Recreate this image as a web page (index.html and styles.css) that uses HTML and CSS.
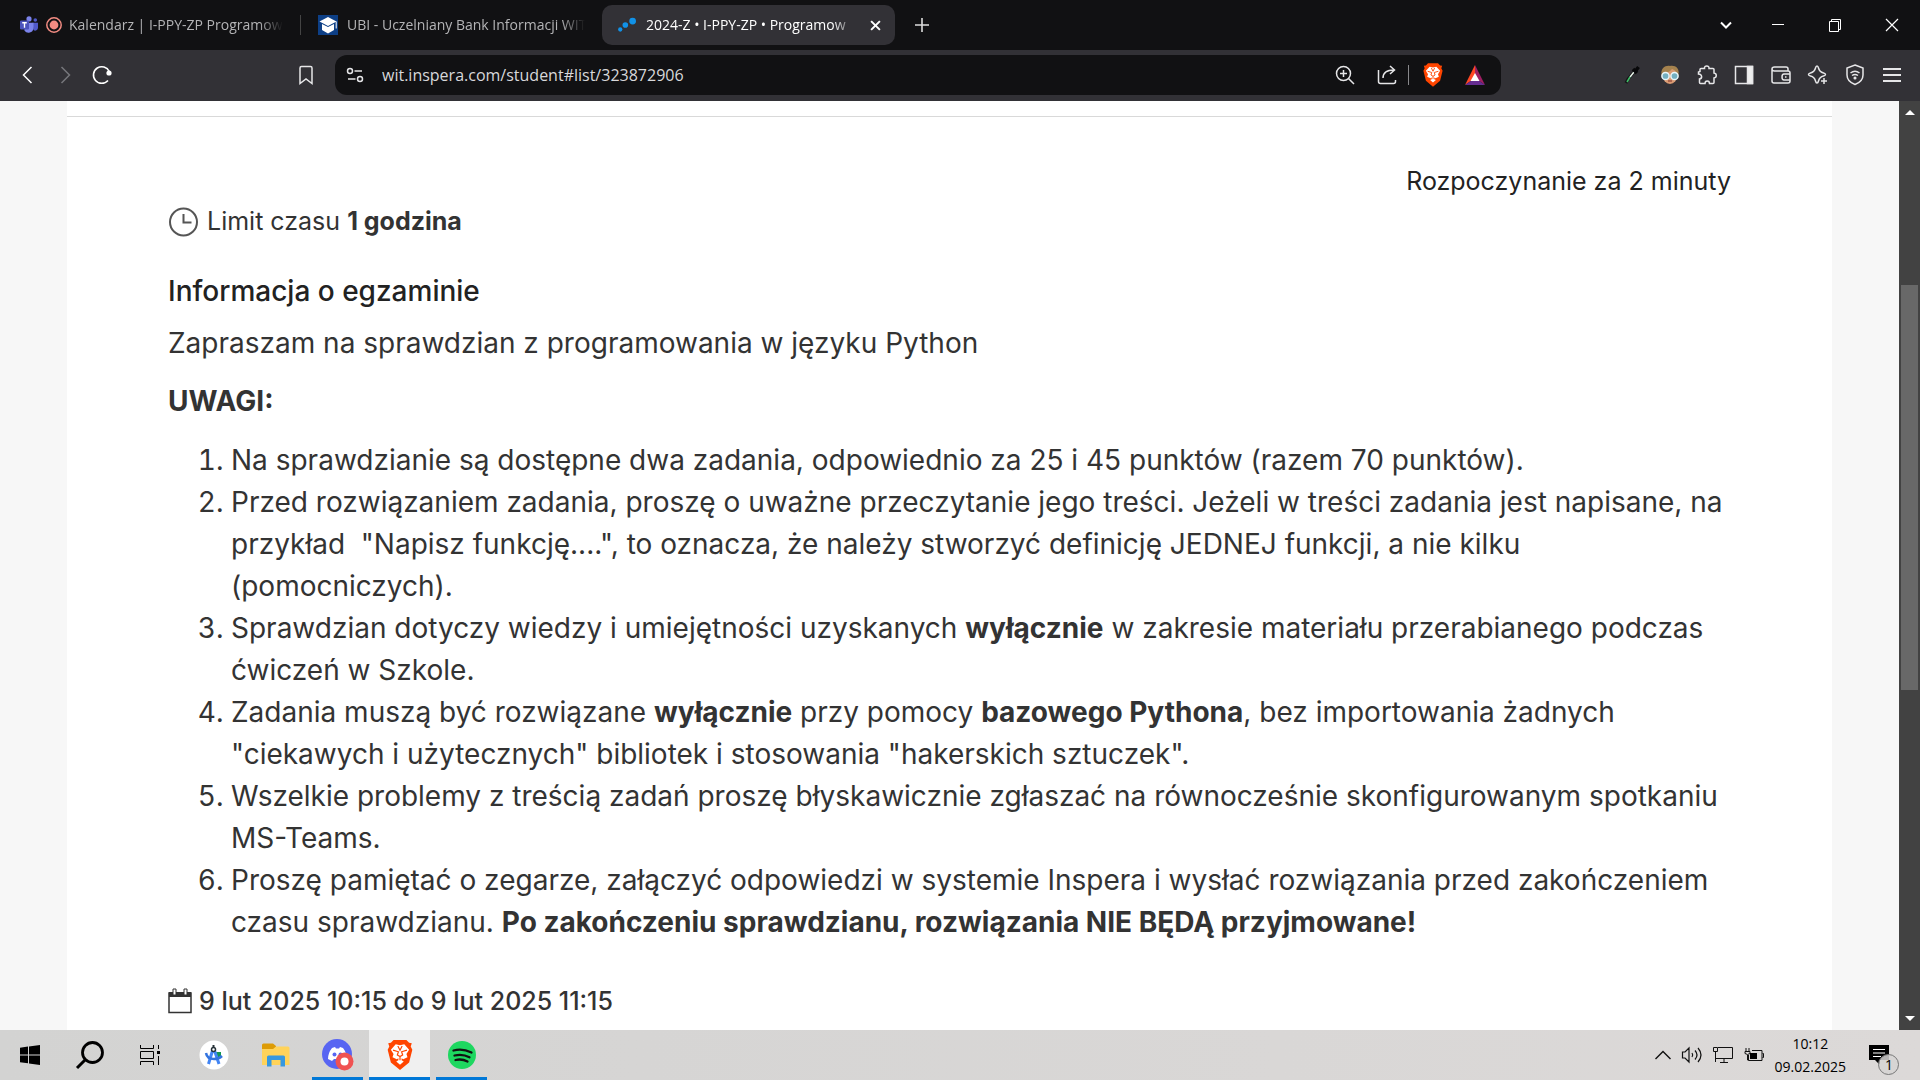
FILE: index.html
```html
<!DOCTYPE html>
<html lang="pl">
<head>
<meta charset="utf-8">
<title>2024-Z • I-PPY-ZP • Programowanie</title>
<link rel="stylesheet" href="styles.css">
</head>
<body>
<div class="desktop">
  <header class="tabs">
    <a class="tab tab-first" href="#kalendarz">
      <svg class="fav" viewBox="0 0 16 16"><circle cx="8" cy="2.6" r="2.3" fill="#7b83eb"/><circle cx="13.6" cy="3.6" r="1.6" fill="#5059c9"/><path d="M11 6h5v4.5a2.5 2.5 0 0 1-4 2z" fill="#5059c9"/><path d="M4 6h8v5a4.5 4.5 0 0 1-8 2z" fill="#7b83eb"/><rect x="0" y="4" width="8" height="8" rx="1" fill="#4b53bc"/><path d="M2 6h4M4 6v4.4" stroke="#fff" stroke-width="1.2"/></svg>
      <svg class="rec" viewBox="0 0 16 16"><circle cx="8" cy="8" r="7.2" fill="none" stroke="#f28b82" stroke-width="1.5"/><circle cx="8" cy="8" r="4.4" fill="#f28b82"/></svg>
      <span class="tab-title">Kalendarz | I-PPY-ZP Programow</span>
    </a>
    <a class="tab tab-second" href="#ubi">
      <svg class="fav-lg" viewBox="0 0 20 20"><path d="M0 0h20v20H0z" fill="#0d3f86"/><path d="M10 2l8.500 4.500L10 11 1.500 6.500z" fill="#fff"/><path d="M4 9v6l6 3.500 6-3.500V9l-6 3z" fill="#fff"/><path d="M18.200 6.500v7" stroke="#fff"/></svg>
      <span class="tab-title">UBI - Uczelniany Bank Informacji WIT</span>
    </a>
    <a class="tab tab-active" href="#egzamin">
      <svg class="fav" viewBox="0 0 16 16"><g fill="#1192e8"><circle cx="2" cy="12" r="1.900"/><circle cx="6.500" cy="8" r="2.500"/><circle cx="13" cy="4.500" r="3"/></g></svg>
      <span class="tab-title">2024-Z • I-PPY-ZP • Programow</span>
      <svg class="x" viewBox="0 0 10 10"><path d="M1 1l8 8M9 1L1 9" stroke="#fff" stroke-width="1.800"/></svg>
    </a>
    <button class="new-tab" aria-label="Nowa karta"><svg width="14" height="14" viewBox="0 0 14 14"><path d="M7 0v14M0 7h14" stroke="#ddd" stroke-width="1.600"/></svg></button>
    <div class="window-buttons">
      <button aria-label="Lista kart"><svg width="14" height="14" viewBox="0 0 14 14"><path d="M2 4.500l5 5 5-5" fill="none" stroke="#fff" stroke-width="2"/></svg></button>
      <button aria-label="Minimalizuj"><svg width="14" height="14" viewBox="0 0 14 14"><path d="M1 6.500h12" stroke="#fff"/></svg></button>
      <button aria-label="Przywróć"><svg width="14" height="14" viewBox="0 0 14 14"><path d="M1.500 3.500h9v10h-9zM3.500 3.500v-2h9v10h-2" fill="none" stroke="#fff"/></svg></button>
      <button aria-label="Zamknij"><svg width="14" height="14" viewBox="0 0 14 14"><path d="M1 1l12 12M13 1L1 13" stroke="#fff" stroke-width="1.200"/></svg></button>
    </div>
  </header>

  <nav class="toolbar">
    <div class="nav-buttons">
      <button aria-label="Wstecz"><svg viewBox="0 0 20 20"><path d="M13.500 2L5.500 10l8 8" stroke="#fff"/></svg></button>
      <button aria-label="Dalej"><svg viewBox="0 0 20 20"><path d="M6.500 2l8 8-8 8" stroke="#77777c"/></svg></button>
      <button aria-label="Odśwież"><svg viewBox="0 0 20 20"><path d="M16 15.500A8.300 8.300 0 1 1 17.300 6.500" stroke="#fff" stroke-width="1.600"/><circle cx="17" cy="8" r="2.600" fill="#fff" stroke="none"/></svg></button>
    </div>
    <button class="bookmark" aria-label="Dodaj zakładkę"><svg viewBox="0 0 20 20"><path d="M4 3q0-1.500 1.500-1.500h9Q16 1.500 16 3v15.500l-6-4.500-6 4.500z"/></svg></button>
    <div class="address">
      <svg viewBox="0 0 20 20"><circle cx="5" cy="6" r="2.500"/><path d="M9.500 6H17M3 14h7.500"/><circle cx="15" cy="14" r="2.500"/></svg>
      <input class="url" type="text" aria-label="Adres" value="wit.inspera.com/student#list/323872906">
      <button aria-label="Powiększenie"><svg viewBox="0 0 20 20"><circle cx="8.500" cy="8.500" r="7"/><path d="M13.500 13.500l5.500 5.500M8.500 5v7M5 8.500h7"/></svg></button>
      <button aria-label="Udostępnij"><svg viewBox="0 0 20 20"><path d="M1.500 5v11.500q0 2 2 2h13q2 0 2-2V15M6 13c0-6 4-8 11-8M13 1l4.500 4L13 9"/></svg></button>
      <span class="sep"></span>
      <button aria-label="Brave Shields"><svg class="color tall" viewBox="0 0 24 28"><use href="#lion"/></svg></button>
      <button aria-label="Brave Rewards"><svg class="color" viewBox="0 0 20 20"><path d="M10 0L0 20l10-7z" fill="#ff4724"/><path d="M10 0l10 20-10-7z" fill="#9e1f63"/><path d="M0 20h20l-10-7z" fill="#662d91"/><path d="M10 8l4.500 8h-9z" fill="#fff"/></svg></button>
    </div>
    <div class="extensions">
      <button aria-label="Próbnik kolorów"><svg viewBox="0 0 20 20"><path d="M11 7L5 14l-2 4" stroke="#151517" stroke-width="3"/><path d="M11 7L7 12" stroke="#e8f4ea"/><path d="M7 12l-3 5" stroke="#3fbf68"/><path d="M10 4l4 4M12.500 6l3-4" stroke="#08080a" stroke-width="3.500"/></svg></button>
      <button aria-label="Profil"><svg class="color" viewBox="0 0 20 20"><ellipse cx="10" cy="10" rx="7.500" ry="9" fill="#d99a72"/><path d="M2 12C-1 2 7 0 10 1c4-1 11 1 8 11-1-5-3-7-6-8-3 4-7 4-9 4z" fill="#a5824e"/><circle cx="5.500" cy="11" r="3.600" fill="#74afc0" stroke="#e8f6fa"/><circle cx="14.500" cy="11" r="3.600" fill="#74afc0" stroke="#e8f6fa"/><path d="M8 16h4" stroke="#9b5140"/></svg></button>
      <button aria-label="Rozszerzenia"><svg viewBox="0 0 20 20"><path d="M4 3.500h3.500c-.5-3.500 5-3.500 4.500 0H16q1 0 1 1V8c3 .5 3 4.500 0 5v4.500q0 1-1 1h-3.500c0-3.500-4.500-3.500-4.500 0H3.500q-1 0-1-1V14c3-.5 3-4.500-1-5V7l1.500-.5v-2q0-1 1-1z"/></svg></button>
      <button aria-label="Panel boczny"><svg viewBox="0 0 20 20"><path d="M1.500 1.500h17v17h-17z"/><path d="M13.500 1.500h5v17h-5z" fill="#eee"/></svg></button>
      <button aria-label="Portfel"><svg viewBox="0 0 20 20"><path d="M17 6V4q0-2-2-2H3.500Q1 2 1 4t2.500 2H17q2 0 2 2v8q0 2-2 2H3q-2 0-2-2V4M19 9h-6q-2 0-2 3t2 3h6M14 12h1.500"/></svg></button>
      <button aria-label="Leo AI"><svg viewBox="0 0 20 20"><path d="M9 1q1 0 1.500 2 1 4 5 5 2 .5 2 1.500t-2 1.500q-4 1-5 5-.5 2-1.500 2t-1.500-2q-1-4-5-5-2-.5-2-1.500T2.500 8q4-1 5-5Q8 1 9 1z"/><path d="M16 13v6M13 16h6"/></svg></button>
      <button aria-label="VPN"><svg viewBox="0 0 20 20"><path d="M10 0l8 3v7c0 5-4 8-8 9.500C6 18 2 15 2 10V3z"/><path d="M5.500 8q4.500-3.500 9 0M7 10.500q3-2 6 0"/><circle cx="10" cy="13" r=".8"/></svg></button>
      <button aria-label="Menu"><svg viewBox="0 0 20 20"><path d="M1 4h18M1 10h18M1 16h18" stroke-width="1.800"/></svg></button>
    </div>
  </nav>

  <div class="viewport">
    <main class="card">
      <div class="inner">
        <p class="starting">Rozpoczynanie za 2 minuty</p>
        <p class="limit"><svg class="clock" viewBox="0 0 30 30"><circle cx="15.500" cy="16" r="13.500"/><path d="M15.500 8v8.500h8"/></svg><span>Limit czasu <strong>1 godzina</strong></span></p>
        <h2>Informacja o egzaminie</h2>
        <p class="intro">Zapraszam na sprawdzian z programowania w języku Python</p>
        <p class="notes"><strong>UWAGI:</strong></p>
        <ol>
          <li>Na sprawdzianie są dostępne dwa zadania, odpowiednio za 25 i 45 punktów (razem 70 punktów).</li>
          <li>Przed rozwiązaniem zadania, proszę o uważne przeczytanie jego treści. Jeżeli w treści zadania jest napisane, na przykład&nbsp; "Napisz funkcję....", to oznacza, że należy stworzyć definicję JEDNEJ funkcji, a nie kilku (pomocniczych).</li>
          <li>Sprawdzian dotyczy wiedzy i umiejętności uzyskanych <strong>wyłącznie</strong> w zakresie materiału przerabianego podczas ćwiczeń w Szkole.</li>
          <li>Zadania muszą być rozwiązane <strong>wyłącznie</strong> przy pomocy <strong>bazowego Pythona</strong>, bez importowania żadnych "ciekawych i użytecznych" bibliotek i stosowania "hakerskich sztuczek".</li>
          <li>Wszelkie problemy z treścią zadań proszę błyskawicznie zgłaszać na równocześnie skonfigurowanym spotkaniu MS-Teams.</li>
          <li>Proszę pamiętać o zegarze, załączyć odpowiedzi w systemie Inspera i wysłać rozwiązania przed zakończeniem czasu sprawdzianu. <strong>Po zakończeniu sprawdzianu, rozwiązania NIE BĘDĄ przyjmowane!</strong></li>
        </ol>
        <p class="date"><svg class="calendar" viewBox="0 0 24 26"><path d="M1 5h22v19.500H1z" fill="#fff" stroke="#333" stroke-width="1.500"/><path d="M1 4h22v5H1z" fill="#333"/><path d="M5 1h3v6H5zM16 1h3v6h-3z" fill="#fff" stroke="#333"/></svg><span>9 lut 2025 10:15 do 9 lut 2025 11:15</span></p>
      </div>
    </main>
    <div class="scrollbar"><span class="arrow up"></span><span class="thumb"></span><span class="arrow down"></span></div>
  </div>

  <footer class="taskbar">
    <button aria-label="Start"><svg width="20" height="20" viewBox="0 0 20 20"><path d="M0 2.800L8 1.600V9.400H0zM9 1.400L20 0v9.400H9zM0 10.400h8v7.900l-8-1.100zM9 10.400h11V20L9 18.500z"/></svg></button>
    <button aria-label="Szukaj"><svg width="28" height="28" viewBox="0 0 28 28"><circle cx="16.500" cy="11.500" r="10" fill="none" stroke="#000" stroke-width="2.800"/><path d="M9.500 18.500L1 27" stroke="#000" stroke-width="3"/></svg></button>
    <button aria-label="Widok zadań"><svg width="20" height="20" viewBox="0 0 20 20"><path d="M.500 0v3.500h13V0M.500 20v-3.500h13V20M.500 6.500h13v7H.500zM18.500 0v4M18.500 11v9" fill="none" stroke="#000"/><path d="M17 6h3v3h-3z"/></svg></button>
    <div class="apps">
      <button aria-label="Android Studio"><svg width="30" height="30" viewBox="0 0 30 30"><circle cx="15" cy="15" r="14.500" fill="#fff"/><path d="M17 12h5v5l-4 1z" fill="#149654"/><path d="M14 9L9.500 24M15 9l5 15" stroke="#4285f4" stroke-width="3"/><path d="M7 13q1 6 8 6 5 0 8-3" fill="none" stroke="#3474df" stroke-width="2.500"/><circle cx="14.500" cy="9.500" r="2" fill="#fff" stroke="#263238" stroke-width="1.500"/><path d="M14.500 5v3" stroke="#263238" stroke-width="2"/></svg></button>
      <button aria-label="Eksplorator plików"><svg width="28" height="24" viewBox="0 0 28 24"><path d="M0 2q0-1.500 1.500-1.500H11L14 3v5H0z" fill="#dd9b06"/><path d="M0 6h11l3-2.500h12q1.500 0 1.500 1.500v17H0z" fill="#ffd35a"/><path d="M5 23.500V14q0-1.500 1.500-1.500h15Q23 12.500 23 14v9.500h-4.500V17h-9v6.500z" fill="#3798df"/></svg></button>
      <button class="running" aria-label="Discord"><svg width="32" height="32" viewBox="0 0 32 32"><circle cx="15" cy="15" r="15" fill="#5865f2"/><path d="M10 9l3-1 1 1.500h3L18 8l3 1q4 5 3 11l-3 2-2-2h-7l-2 2-4-2Q6 14 10 9z" fill="#fff"/><circle cx="12.500" cy="15.500" r="2" fill="#5865f2"/><circle cx="18.500" cy="15.500" r="2" fill="#5865f2"/><circle cx="22.500" cy="22.500" r="9" fill="#f05252"/><circle cx="22.500" cy="22.500" r="4" fill="#fff"/></svg></button>
      <button class="current" aria-label="Brave"><svg width="26" height="30" viewBox="0 0 24 28"><g id="lion"><path d="M6 0h12l2.500 2.500L23 3l-1 3 1.500 3-3 12-8.500 7-8.500-7-3-12L2 6 1 3l2.500-.5z" fill="#ff4500"/><path d="M12 5l4-1 4.500 5-2.500 4 1 3-4 2-1.500-1v2l2 1-3.500 3-3.500-3 2-1v-2L9 18l-4-2 1-3-2.500-4L8 4z" fill="#fff"/><path d="M5.500 9.500l5 1.500-1 3 2.500 1.500 2.500-1.500-1-3 5-1.500M12 15.500V19M10 5.500l2 4 2-4" fill="none" stroke="#ff4500" stroke-width="1.100"/></g></svg></button>
      <button class="running" aria-label="Spotify"><svg width="28" height="28" viewBox="0 0 28 28"><circle cx="14" cy="14" r="14" fill="#1ed760"/><path d="M5.500 9.500q9-2.500 18 2M6.500 14.500q8-2 15 1.800M7.500 19q6.500-1.500 12 1.500" fill="none" stroke="#111" stroke-width="2.300" stroke-linecap="round"/></svg></button>
    </div>
    <div class="tray">
      <svg width="16" height="10" viewBox="0 0 16 10"><path d="M.500 9L8 1.500 15.500 9" fill="none" stroke="#111" stroke-width="1.400"/></svg>
      <svg width="20" height="18" viewBox="0 0 20 18"><path d="M.500 6v6H3l4 4V2L3 6zM10 7q1.500 2 0 4M13 4.500q4 4.500 0 9M16 2q6 7 0 14" fill="none" stroke="#111" stroke-width="1.200"/></svg>
      <svg width="20" height="18" viewBox="0 0 20 18"><path d="M5 1.500h14.500v11H2.500V6M7 16.500h8M11 12.500v4M.500 1.500h4v4h-4zM2.500 6v10" fill="none" stroke="#111"/></svg>
      <svg width="20" height="16" viewBox="0 0 20 16"><path d="M8 3.500h10v10H4.500V8M18.500 6.500h1v4h-1M2 1v3M5 1v3M1 4.500h5v2q-2.500 2-5 0zM3.500 8v5h1" fill="none" stroke="#111"/><path d="M6 6h7v6H6z"/></svg>
      <time class="clock-text" datetime="2025-02-09T10:12">10:12<br>09.02.2025</time>
      <div class="notice"><svg width="30" height="30" viewBox="0 0 30 30"><path d="M0 0h20v15h-9v5l-5-5H0z"/><path d="M4 4.500h12M4 8h12M4 11.500h8" stroke="#fff"/><circle cx="19.500" cy="19.500" r="10" fill="#d6d4d3" fill-opacity=".85" stroke="#777"/></svg><span class="badge">1</span></div>
    </div>
  </footer>
</div>
</body>
</html>
```
FILE: styles.css
```css
* { box-sizing: border-box; }
body { margin: 0; font-family: "Open Sans", "Noto Sans", sans-serif; }
button { display: flex; align-items: center; justify-content: center; padding: 0; border: 0; background: none; color: inherit; font: inherit; }
svg { flex: none; display: block; overflow: visible; }
p, h2, ol { margin: 0; }
.desktop { display: flex; flex-direction: column; height: 100vh; overflow: hidden; }

.tabs { display: flex; align-items: center; flex: none; height: 50px; background: #111113; color: #b4b4b6; }
.tab { display: flex; align-items: center; height: 40px; color: inherit; text-decoration: none; font-family: "Open Sans", sans-serif; font-size: 14px; line-height: 20px; }
.tab-title { flex: 1; min-width: 0; overflow: hidden; white-space: nowrap; -webkit-mask-image: linear-gradient(to left, transparent, #000 24px); mask-image: linear-gradient(to left, transparent, #000 24px); }
.tab-first { width: 300px; padding: 0 17px 0 20px; }
.tab-first .rec { width: 16px; height: 16px; margin: 0 7px 0 8px; }
.tab-second { width: 302px; padding: 0 17px 0 18px; position: relative; }
.tab-second::before { content: ""; position: absolute; left: 0; top: 10px; width: 1px; height: 20px; background: #444; }
.tab-active { width: 293px; padding: 0 14px 0 16px; border-radius: 10px; background: #323136; color: #fff; }
.fav { width: 18px; height: 18px; }
.fav-lg { width: 20px; height: 20px; margin-right: 9px; }
.tab-active .fav { margin-right: 10px; }
.x { width: 11px; height: 11px; margin-left: 14px; }
.new-tab { width: 54px; height: 40px; }
.window-buttons { display: flex; margin-left: auto; }
.window-buttons button { width: 57px; height: 50px; }
.window-buttons button:first-child { width: 46px; }

.toolbar { display: flex; align-items: center; flex: none; height: 51px; padding: 0 18px 1px; background: #323136; }
.toolbar svg { width: 20px; height: 20px; fill: none; stroke: #e6e6e8; stroke-width: 1.500px; }
.toolbar svg.color { stroke: none; }
.toolbar svg.tall { height: 24px; }
.nav-buttons { display: flex; gap: 17px; }
.bookmark { margin-left: 184px; }
.address { display: flex; align-items: center; flex: 1; height: 40px; margin: 0 122px 0 19px; padding: 0 16px 0 10px; border-radius: 12px; background: #111113; }
.url { flex: 1; min-width: 0; margin-left: 17px; padding: 0; border: 0; outline: 0; background: none; color: #d8d8da; font-family: "Open Sans", sans-serif; font-size: 16px; line-height: 24px; }
.address button + button { margin-left: 22px; }
.sep { width: 1px; height: 20px; margin: 0 14px 0 11px; background: #88888b; }
.extensions { display: flex; gap: 17px; }

.viewport { display: flex; flex: 1; min-height: 0; background: #f7f7f7; }
.card { flex: 1; min-width: 0; overflow: hidden; margin: 0 67px; padding-top: 15px; background: #fff; color: #333; font-family: Inter, sans-serif; }
.inner { padding: 44px 101px 0; border-top: 1px solid #d9d9d9; }
.starting { text-align: right; color: #222; font-size: 25px; line-height: 40px; }
.limit { display: flex; align-items: center; gap: 9px; font-size: 25px; line-height: 40px; }
.clock { width: 30px; height: 30px; fill: none; stroke: #555; stroke-width: 2px; }
h2 { margin-top: 29px; color: #222; font-size: 28px; font-weight: 500; line-height: 42px; }
.intro, .notes, ol { font-size: 28px; line-height: 42px; }
.intro { margin-top: 10px; }
.notes { margin-top: 16px; }
ol { margin-top: 17px; padding-left: 63px; }
.date { display: flex; align-items: center; gap: 7px; margin-top: 38px; font-size: 25px; font-weight: 500; line-height: 40px; }
.calendar { width: 24px; height: 26px; }
.scrollbar { display: flex; flex-direction: column; align-items: center; flex: none; width: 21px; padding: 9px 0; background: #424242; }
.thumb { width: 17px; height: 405px; margin-top: 170px; background: #686868; }
.arrow { border: 5px solid transparent; }
.up { border-top: 0; border-bottom-color: #fff; }
.down { margin-top: auto; border-bottom: 0; border-top-color: #fff; }

.taskbar { display: flex; flex: none; height: 50px; background: linear-gradient(90deg, #d3d3d2, #dcd9d8); color: #000; }
.taskbar button { width: 60px; height: 50px; border: 0 solid transparent; border-width: 3px 0; }
.apps { display: flex; gap: 11px; margin-left: 8px; }
.apps button { width: 51px; }
.apps .running { border-bottom-color: #0078d7; }
.apps .current { width: 61px; margin: 0 -5px; border-top: 0; padding-top: 3px; border-bottom-color: #0078d7; background: #f0f0f0; }
.tray { display: flex; align-items: center; gap: 11px; margin-left: auto; padding-right: 21px; }
.clock-text { font-size: 14px; line-height: 23px; text-align: center; }
.notice { position: relative; margin: 10px 0 0 12px; }
.badge { position: absolute; left: 10px; top: 10px; width: 20px; font-size: 14px; line-height: 20px; text-align: center; }
```
